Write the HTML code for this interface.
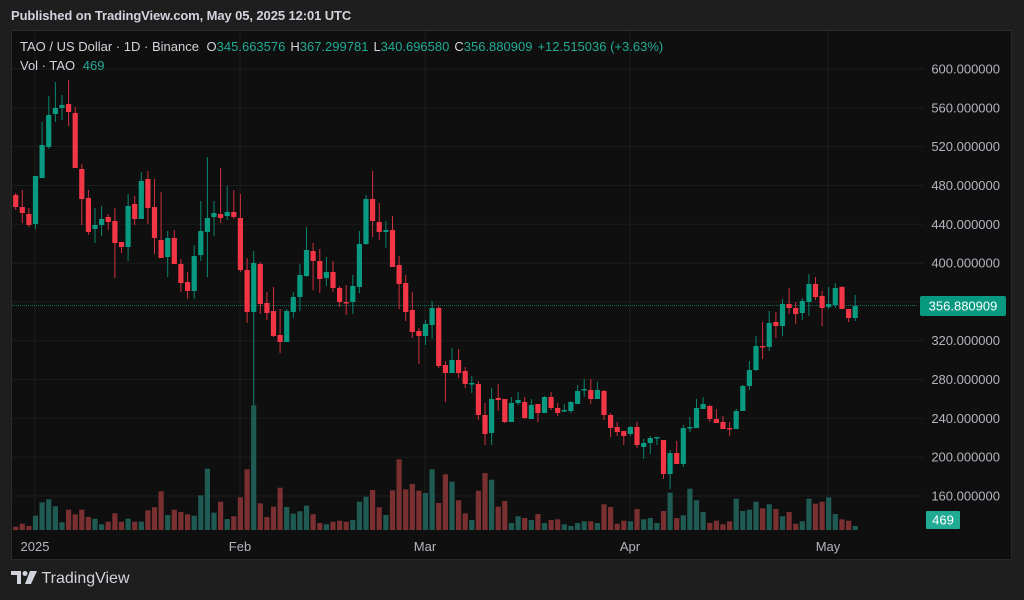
<!DOCTYPE html>
<html><head><meta charset="utf-8"><style>
html,body{margin:0;padding:0;background:#1e1e1e;width:1024px;height:600px;overflow:hidden;font-family:"Liberation Sans",sans-serif}
#hdr{position:absolute;left:11px;top:8px;font-size:13px;color:#d1d4dc;font-weight:bold;letter-spacing:-0.1px}
#chart{position:absolute;left:11px;top:30px;width:1001px;height:530px;background:#0f0f0f;border:1px solid #2a2a2a;box-sizing:border-box}
#ft{position:absolute;left:11px;top:570px;color:#d1d4dc;font-size:16px}
</style></head><body>
<div id="hdr">Published on TradingView.com, May 05, 2025 12:01 UTC</div>
<div id="chart"></div>
<svg id="s" width="1024" height="600" style="position:absolute;left:0;top:0" xmlns="http://www.w3.org/2000/svg" font-family="Liberation Sans, sans-serif"></svg>
<div id="ft"><svg width="26" height="14" viewBox="0 0 26 14" style="vertical-align:-1px"><path d="M0 0h10v13h-4V4H0z" fill="#d1d4dc"/><circle cx="14" cy="2.5" r="2.5" fill="#d1d4dc"/><path d="M19 0h7l-6 13h-6z" fill="#d1d4dc"/></svg> <span style="vertical-align:1px">TradingView</span></div>
<script>
var C="195,207,193,210;207,213,190,223;214,225,208,227;224,176,176,229;178,145,122,178;147,115,96,149;114,108,82,122;108,105,95,120;104,112,80,126;113,168,107,168;169,199,164,225;198,232,190,235;229,225,208,243;225,219,206,236;217,222,214,230;221,243,208,278;242,247,242,253;247,206,194,261;204,219,196,225;219,181,172,219;179,208,171,224;207,238,179,254;240,258,192,258;257,238,231,277;238,264,230,264;264,283,259,292;282,291,272,299;291,256,245,299;255,231,201,261;232,218,157,277;217,213,201,236;214,218,168,223;216,212,186,220;212,217,190,219;218,270,194,272;270,312,258,323;312,263,251,405;264,304,262,314;303,313,292,320;311,336,287,337;335,342,309,353;342,311,309,342;312,297,292,318;297,275,264,311;276,250,227,277;251,261,243,290;261,279,249,293;278,272,257,286;272,288,261,292;288,302,286,307;302,303,285,315;302,286,275,314;287,244,231,293;244,199,195,245;199,221,171,237;222,232,203,240;232,230,221,248;230,267,216,267;265,284,256,309;283,312,275,321;310,332,292,338;331,336,328,364;336,324,320,345;325,308,301,339;308,366,306,368;365,373,361,402;373,360,348,373;360,373,349,378;371,384,367,388;384,383,376,393;384,415,381,420;415,434,403,445;433,399,388,445;398,400,384,411;399,422,399,423;422,403,397,422;403,400,392,405;402,418,397,419;419,405,399,419;404,413,404,422;413,397,396,413;397,408,392,410;408,413,403,416;411,410,404,412;411,402,401,413;404,391,385,404;390,389,379,397;390,399,379,404;399,390,382,399;391,415,390,420;415,428,413,437;427,432,422,436;431,436,431,445;434,427,426,436;427,445,422,448;447,443,439,459;443,438,436,454;438,437,437,445;440,474,440,479;474,453,450,489;453,464,441,464;464,428,425,467;428,427,417,432;428,408,399,428;409,404,397,409;406,419,405,422;419,423,409,423;422,429,416,429;428,429,422,436;429,411,409,429;411,386,385,411;386,370,361,390;370,346,336,371;346,347,322,359;347,323,311,351;322,326,312,338;326,304,299,336;304,308,288,314;308,314,302,324;313,301,298,320;302,284,274,316;284,297,277,300;296,308,291,326;307,304,287,309;305,288,283,308;287,309,286,309;309,318,309,322;318,306,295,321".split(";");
var V7=[380,371,378,347,307,298,319,367,329,343,329,351,356,373,365,340,365,356,365,365,331,322,274,345,329,336,343,347,286,206,338,305,357,349,292,208,16,310,351,320,263,321,341,334,317,343,369,373,365,362,365,360,305,290,270,322,345,271,178,268,252,272,279];
var V8=[88,189,103,125,181,220,240,152,99,119,200,183,249,229,234,240,222,249,240,238,253,258,249,244,244,249,193,201,251,242,244,207,238,234,249,213,158,234,226,146,181,216,249,242,253,244,176,213,209,185,205,193,207,229,216,251,244,176,191,185,172,222,238,242,258];
var vh=[];V7.forEach(function(z){vh.push((390-z)/3)});V8.forEach(function(z){vh.push((270-z)/3)});
var h='';
for(var k=0;k<12;k++){var y=69+k*38.82;h+='<line x1="12" x2="924" y1="'+y.toFixed(1)+'" y2="'+y.toFixed(1)+'" stroke="#1c1c1c"/>';}
[35,240,425,630,828].forEach(function(x){h+='<line x1="'+x+'" x2="'+x+'" y1="31" y2="531" stroke="#1c1c1c"/>'});
for(var i=0;i<128;i++){var x=15.7+i*6.61;var p=C[i].split(',').map(Number);var up=p[1]<=p[0];
 h+='<rect x="'+(x-2.6).toFixed(1)+'" y="'+(530-vh[i]).toFixed(1)+'" width="5.2" height="'+vh[i].toFixed(1)+'" fill="'+(up?'#1f5b53':'#7a2f31')+'"/>';}
h+='<line x1="12" x2="918" y1="305.5" y2="305.5" stroke="#089981" stroke-dasharray="1,1" opacity="0.7"/>';
for(var i=0;i<128;i++){var x=15.7+i*6.61;var p=C[i].split(',').map(Number);var up=p[1]<=p[0];var c=up?'#089981':'#f23645';
 var t=Math.min(p[0],p[1]),b=Math.max(p[0],p[1]);if(b-t<1.5)b=t+1.5;
 h+='<line x1="'+x.toFixed(1)+'" x2="'+x.toFixed(1)+'" y1="'+p[2]+'" y2="'+p[3]+'" stroke="'+c+'" stroke-width="1" opacity="0.85"/>';
 h+='<rect x="'+(x-2.6).toFixed(1)+'" y="'+t+'" width="5.2" height="'+(b-t)+'" fill="'+c+'"/>';}
for(var k=0;k<12;k++){var y=69+k*38.82;var pr=600-k*40;h+='<text x="1000" y="'+(y+4.5).toFixed(1)+'" text-anchor="end" font-size="13" fill="#b2b5be">'+pr+'.000000</text>';}
h+='<rect x="920" y="296" width="86" height="20" rx="2" fill="#089981"/><text x="963" y="310.5" text-anchor="middle" font-size="13" fill="#fff">356.880909</text>';
h+='<rect x="926" y="511" width="34" height="18" rx="1" fill="#22ab94"/><text x="943" y="524.5" text-anchor="middle" font-size="13" fill="#fff">469</text>';
[["2025",35],["Feb",240],["Mar",425],["Apr",630],["May",828]].forEach(function(a){h+='<text x="'+a[1]+'" y="551" text-anchor="middle" font-size="13" fill="#b2b5be">'+a[0]+'</text>'});
var g='#22ab94';
h+='<text x="20" y="51" font-size="13" fill="#d1d4dc">TAO / US Dollar · 1D · Binance <tspan dx="4">O</tspan><tspan fill="'+g+'">345.663576</tspan><tspan dx="5">H</tspan><tspan fill="'+g+'">367.299781</tspan><tspan dx="5">L</tspan><tspan fill="'+g+'">340.696580</tspan><tspan dx="5">C</tspan><tspan fill="'+g+'">356.880909</tspan><tspan dx="5" fill="'+g+'">+12.515036 (+3.63%)</tspan></text>';
h+='<text x="20" y="70" font-size="13" fill="#d1d4dc">Vol · TAO <tspan dx="4" fill="'+g+'">469</tspan></text>';
document.getElementById('s').innerHTML=h;
</script>
</body></html>
